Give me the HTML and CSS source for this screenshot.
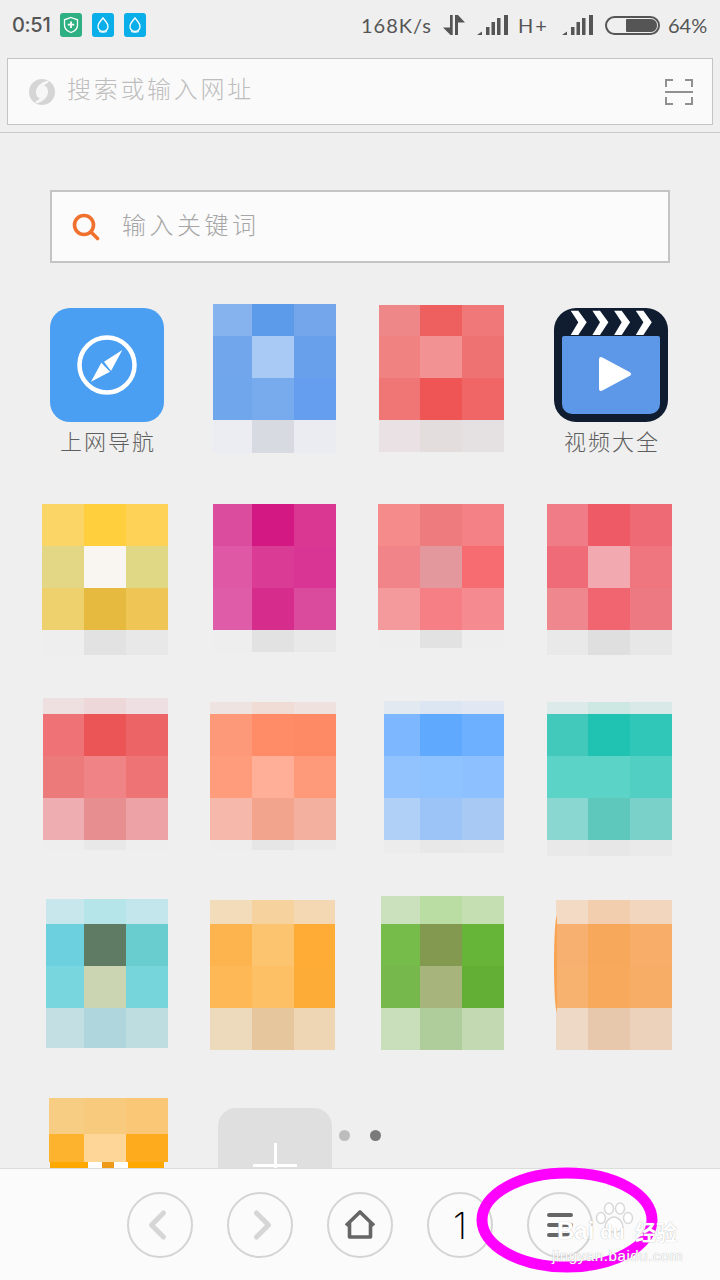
FILE: index.html
```html
<!DOCTYPE html>
<html lang="zh-CN">
<head>
    <meta charset="UTF-8">
    <meta name="viewport" content="width=device-width, initial-scale=1.0">
    <title>浏览器主页</title>
    <link rel="stylesheet" href="styles.css">
</head>
<body>
    <header class="top">
        <div class="status">
            <span class="clock">0:51</span>
            <svg class="notice" viewBox="0 0 22 24"><rect width="22" height="24" rx="3" fill="#2fb083"/><path d="M11 4.500l6.500 2.300v5.400c0 3.600-2.800 5.900-6.500 7.300-3.700-1.400-6.500-3.700-6.500-7.300V6.800z" fill="none" stroke="#fff" stroke-width="1.300"/><path d="M11 8.500v6.500M7.800 11.700h6.400" stroke="#fff" stroke-width="1.800"/></svg>
            <svg class="notice" viewBox="0 0 22 24"><rect width="22" height="24" rx="3" fill="#0aaee8"/><path d="M11 5c2 2.500 5 5.200 5 8.400a5 5 0 0 1-10 0C6 10.200 9 7.500 11 5z" fill="none" stroke="#fff" stroke-width="1.300"/><path d="M7 18.500c2.500 1 5.500 1 8 0" fill="none" stroke="#fff" stroke-width="1"/></svg>
            <svg class="notice" viewBox="0 0 22 24"><rect width="22" height="24" rx="3" fill="#0aaee8"/><path d="M11 5c2 2.500 5 5.200 5 8.400a5 5 0 0 1-10 0C6 10.200 9 7.500 11 5z" fill="none" stroke="#fff" stroke-width="1.300"/><path d="M7 18.500c2.500 1 5.500 1 8 0" fill="none" stroke="#fff" stroke-width="1"/></svg>
            <span class="status-right">
                <span class="speed">168K/s</span>
                <svg class="arrows" viewBox="0 0 22 20"><path d="M7 0h2.700v20H7.500L0 12.500h7zM12 0h3l7 7.500h-7V20h-3z" fill="#555"/></svg>
                <svg class="signal" viewBox="0 0 31 20"><path d="M0 20l5-3.500V20zM9 20v-8h3.500v8zM14.500 20V7H18v13zM20 20V3h3.500v17zM27 20V0h4v20z" fill="#555"/></svg>
                <span class="net">H+</span>
                <svg class="signal second" viewBox="0 0 31 20"><path d="M0 20l5-3.500V20zM9 20v-8h3.500v8zM14.500 20V7H18v13zM20 20V3h3.500v17zM27 20V0h4v20z" fill="#555"/></svg>
                <span class="battery"><span class="battery-level"></span></span>
                <span class="percent">64%</span>
            </span>
        </div>
        <div class="address">
            <svg class="address-logo" viewBox="0 0 26 26"><circle cx="13" cy="13" r="13" fill="#d5d5d5"/><path d="M19 1.500C12 3 6.500 8 7 14c.2 3 2 5 4 5.500C7 22 5.500 23.500 7 24.500c7-1.500 12.500-6.500 12-12.500-.2-3-2-5-4-5.500 4-2.500 5.500-4 4-5z" fill="#f6f6f6"/></svg>
            <span class="address-text">搜索或输入网址</span>
            <svg class="scan" viewBox="0 0 28 26"><path d="M1 8V1h7M20 1h7v7M1 18v7h7M20 25h7v-7" fill="none" stroke="#909090" stroke-width="2"/><path d="M0 13h28" stroke="#909090" stroke-width="2"/></svg>
        </div>
    </header>

    <main class="home">
        <div class="keyword">
            <svg class="keyword-icon" viewBox="0 0 28 28"><circle cx="12" cy="12" r="9.500" fill="none" stroke="#f0702d" stroke-width="3.600"/><path d="M19 19l6.500 6.500" stroke="#f0702d" stroke-width="3.600" stroke-linecap="round"/></svg>
            <span class="keyword-text">输入关键词</span>
        </div>

        <div class="apps">
            <div class="cell app">
                <svg class="app-icon" viewBox="0 0 114 114"><rect width="114" height="114" rx="20" fill="#4a9ff2"/><circle cx="57" cy="57" r="27.500" fill="none" stroke="#fff" stroke-width="4.500"/><path d="M72.300 42L54 53.700 61 63zM41 73.700L51.300 54.700 60 63.700z" fill="#fff"/></svg>
                <span class="app-name">上网导航</span>
            </div>
            <div class="cell" data-tile="0"></div>
            <div class="cell" data-tile="1"></div>
            <div class="cell app video">
                <svg class="app-icon" viewBox="0 0 114 114">
                    <rect width="114" height="114" rx="22" fill="#101d30"/>
                    <path d="M16.700 2.700h7.600l8.400 11.600L24.300 27h-7.600l7.600-12.700zM38.400 2.700H46l8.400 11.600L46 27h-7.600L46 14.300zM60.100 2.700h7.600l8.400 11.600L67.700 27h-7.600l7.600-12.700zM81.800 2.700h7.600l8.400 11.600L89.400 27h-7.600l7.600-12.700z" fill="#fff"/>
                    <path d="M10 28h94a2 2 0 0 1 2 2v66a10 10 0 0 1-10 10H18A10 10 0 0 1 8 96V30a2 2 0 0 1 2-2z" fill="#5c97e8"/>
                    <path d="M47 51l28 15-28 15z" fill="#fff" stroke="#fff" stroke-width="4" stroke-linejoin="round"/>
                </svg>
                <span class="app-name">视频大全</span>
            </div>

            <div class="cell" data-tile="2"></div>
            <div class="cell" data-tile="3"></div>
            <div class="cell" data-tile="4"></div>
            <div class="cell" data-tile="5"></div>

            <div class="cell" data-tile="6"></div>
            <div class="cell" data-tile="7"></div>
            <div class="cell" data-tile="8"></div>
            <div class="cell" data-tile="9"></div>

            <div class="cell" data-tile="10"></div>
            <div class="cell" data-tile="11"></div>
            <div class="cell" data-tile="12"></div>
            <div class="cell" data-tile="13"><span class="tile-edge"></span></div>

            <div class="cell" data-tile="14"><div class="tile-strip"></div></div>
            <div class="cell add-cell">
                <div class="add-tile"><span class="plus"></span></div>
            </div>
        </div>

        <div class="dots"><span class="dot"></span><span class="dot active"></span></div>
    </main>

    <footer class="toolbar">
        <button class="round">
            <svg viewBox="2 2 62 62"><path d="M36.500 21L24.500 33l12 12" fill="none" stroke="#d6d6d6" stroke-width="5" stroke-linecap="round" stroke-linejoin="round"/></svg>
        </button>
        <button class="round">
            <svg viewBox="2 2 62 62"><path d="M29.500 21l12 12-12 12" fill="none" stroke="#d6d6d6" stroke-width="5" stroke-linecap="round" stroke-linejoin="round"/></svg>
        </button>
        <button class="round">
            <svg viewBox="2 2 62 62"><path d="M19 33.500L33 20l14 13.500M22.500 31v14h21V31" fill="none" stroke="#666" stroke-width="3.600" stroke-linejoin="round"/></svg>
        </button>
        <button class="round count">1</button>
        <button class="round">
            <svg viewBox="2 2 62 62"><path d="M22 23h22M22 33h22M22 43h22" stroke="#666" stroke-width="4" stroke-linecap="round"/></svg>
        </button>
    </footer>

    <svg class="mark" viewBox="0 0 190 114"><ellipse cx="95" cy="54" rx="85" ry="47" fill="none" stroke="#ff00ff" stroke-width="11"/></svg>

    <div class="watermark">
        <svg class="paw" viewBox="0 0 40 32"><g fill="none" stroke="#d8d8d8" stroke-width="1.500"><ellipse cx="7" cy="16" rx="4.500" ry="5.500" fill="#fff"/><ellipse cx="15" cy="6.500" rx="4.500" ry="5.500" fill="#fff"/><ellipse cx="26" cy="6.500" rx="4.500" ry="5.500" fill="#fff"/><ellipse cx="34" cy="16" rx="4.500" ry="5.500" fill="#fff"/><path d="M20 15c5 0 9 6 9 10s-4 5-9 5-9-1-9-5 4-10 9-10z" fill="#fff"/></g></svg>
        <span class="wm-brand">Bai<span class="wm-du">du</span></span>
        <span class="wm-cn">经验</span>
        <span class="wm-url">jingyan.baidu.com</span>
    </div>

    <script src="script.js"></script>
</body>
</html>
```

FILE: styles.css
```css
* {
    box-sizing: border-box;
}

html, body {
    margin: 0;
    padding: 0;
}

body {
    position: relative;
    display: flex;
    flex-direction: column;
    width: 720px;
    height: 1280px;
    overflow: hidden;
    background-color: #efefef;
    font-family: "Noto Sans CJK SC", sans-serif;
}

/* status bar and address bar */
.top {
    height: 133px;
    border-bottom: 1px solid #c8c8c8;
}

.status {
    display: flex;
    align-items: center;
    height: 50px;
    padding: 0 12px;
    color: #555;
    font-family: Lato, sans-serif;
}

.clock {
    width: 48px;
    font-family: Inter, sans-serif;
    font-size: 20px;
    font-weight: 500;
    letter-spacing: -0.3px;
}

.notice {
    width: 22px;
    height: 24px;
    margin-right: 10px;
}

.status-right {
    display: flex;
    align-items: center;
    margin-left: auto;
}

.speed {
    font-size: 20px;
    letter-spacing: 1px;
    width: 82px;
}

.arrows {
    width: 22px;
    height: 20px;
    margin-right: 12px;
}

.signal {
    width: 31px;
    height: 20px;
}

.signal.second {
    margin-right: 12px;
}

.net {
    width: 54px;
    padding-left: 10px;
    font-size: 20px;
    letter-spacing: 2px;
}

.battery {
    display: flex;
    justify-content: flex-end;
    align-items: center;
    width: 55px;
    height: 19px;
    padding: 1px;
    margin-right: 8px;
    border: 2px solid #555;
    border-radius: 10px;
}

.battery-level {
    width: 31px;
    height: 13px;
    background-color: #555;
    border-radius: 1px 6px 6px 1px;
}

.percent {
    width: 40px;
    font-size: 20px;
}

.address {
    display: flex;
    align-items: center;
    height: 67px;
    margin: 8px 7px 0;
    padding: 0 19px 0 21px;
    background-color: #fafafa;
    border: 1px solid #c4c4c4;
}

.address-logo {
    width: 26px;
    height: 26px;
    margin-right: 12px;
}

.address-text {
    padding-bottom: 9px;
    font-size: 24px;
    font-weight: 300;
    letter-spacing: 2.700px;
    color: #bdbdbd;
}

.scan {
    width: 28px;
    height: 26px;
    margin-left: auto;
}

/* home page */
.home {
    position: relative;
    flex: 1;
    overflow: hidden;
}

.keyword {
    display: flex;
    align-items: center;
    height: 73px;
    margin: 57px 50px 0;
    padding: 0 20px;
    background-color: #fbfbfb;
    border: 2px solid #c4c4c4;
}

.keyword-icon {
    width: 28px;
    height: 28px;
    margin-right: 22px;
}

.keyword-text {
    padding-bottom: 6px;
    font-size: 24px;
    font-weight: 300;
    letter-spacing: 3.500px;
    color: #a6a6a6;
}

.apps {
    display: grid;
    grid-template-columns: repeat(4, 168px);
    grid-template-rows: 200px 194px 198px 202px auto;
    margin: 41px 0 0 42px;
}

.cell {
    position: relative;
}

.app {
    display: flex;
    flex-direction: column;
    align-items: center;
    width: 114px;
    margin: 4px 0 0 8px;
}

.app-icon {
    display: block;
    width: 114px;
    height: 114px;
}

.app-name {
    margin-top: 4px;
    margin-right: -2px;
    font-size: 22px;
    font-weight: 300;
    letter-spacing: 2px;
    line-height: 28px;
    color: #5f5f5f;
    white-space: nowrap;
}

.tile {
    display: grid;
}

.tile-edge {
    position: absolute;
    left: 8px;
    top: 20px;
    width: 3px;
    height: 96px;
    background-color: #f9a452;
    border-radius: 100% 0 0 100% / 50% 0 0 50%;
}

.tile-strip {
    height: 6px;
    width: 114px;
    margin-left: 8px;
    background: linear-gradient(to right, #ffa800 38px, #fff 38px, #fff 52px, #ee9b1c 52px, #ee9b1c 64px, #fff 64px, #fff 78px, #ffa800 78px);
}

.add-cell {
    padding: 10px 0 0 8px;
}

.add-tile {
    position: relative;
    width: 114px;
    height: 114px;
    background-color: #dfdfdf;
    border-radius: 18px;
}

.plus {
    position: absolute;
    left: 35px;
    top: 35px;
    width: 44px;
    height: 44px;
    background:
        linear-gradient(#fff, #fff) center / 44px 3px no-repeat,
        linear-gradient(#fff, #fff) center / 3px 44px no-repeat;
}

.dots {
    position: absolute;
    left: 339px;
    top: 997px;
    display: flex;
    gap: 20px;
}

.dot {
    width: 11px;
    height: 11px;
    background-color: #bdbdbd;
    border-radius: 50%;
}

.dot.active {
    background-color: #7a7a7a;
}

/* bottom toolbar */
.toolbar {
    display: flex;
    justify-content: center;
    gap: 34px;
    height: 112px;
    padding-top: 23px;
    background-color: #fbfbfb;
    border-top: 1px solid #dcdcdc;
}

.round {
    width: 66px;
    height: 66px;
    padding: 0;
    background: none;
    border: 2px solid #d4d4d4;
    border-radius: 50%;
}

.round svg {
    display: block;
    width: 62px;
    height: 62px;
}

.count {
    font-family: Inter, sans-serif;
    font-size: 37px;
    font-weight: 200;
    color: #000;
}

/* marker and watermark drawn over the screenshot */
.mark {
    position: absolute;
    left: 472px;
    top: 1166px;
    width: 190px;
    height: 114px;
}

.watermark {
    position: absolute;
    left: 550px;
    top: 1200px;
    width: 134px;
    height: 64px;
    color: #fff;
    font-family: "Liberation Sans", sans-serif;
}

.paw {
    position: absolute;
    left: 44px;
    top: 2px;
    width: 40px;
    height: 32px;
}

.wm-brand {
    position: absolute;
    left: 7px;
    top: 17px;
    font-size: 24px;
    font-weight: 700;
    text-shadow: 0 0 1px #aaa;
}

.wm-du {
    position: relative;
    left: 6px;
    font-size: 20px;
}

.wm-cn {
    position: absolute;
    left: 85px;
    top: 18px;
    font-family: "Noto Sans CJK SC", sans-serif;
    font-size: 21px;
    line-height: 26px;
    font-weight: 700;
    text-shadow: 0 0 1px #aaa;
}

.wm-url {
    position: absolute;
    left: 2px;
    top: 48px;
    font-size: 15px;
    line-height: 16px;
    letter-spacing: 0.600px;
    text-shadow: 0 0 1px #999;
}
```

FILE: script.js
```js
// blurred app tiles: column widths, row heights, offset in the cell, cell colours row by row
const bg = '#eeeeee';
const tiles = [
    { left: 3, top: 0, cols: [39, 42, 42], rows: [32, 42, 42, 33], colors: ['#86b2ee', '#5c9bea', '#74a6ec', '#71a6ed', '#a9caf5', '#68a0eb', '#6fa6ec', '#78abee', '#659eee', '#ecedf2', '#d7dae0', '#ebecf1'] },
    { left: 1, top: 1, cols: [41, 42, 42], rows: [31, 42, 42, 32], colors: ['#ee8888', '#ee5f5f', '#f07878', '#f08282', '#f29292', '#ef7272', '#f07676', '#ef5555', '#f06666', '#e9e1e3', '#e3dddd', '#e5e1e2'] },
    { left: 0, top: 0, cols: [42, 42, 42], rows: [42, 42, 42, 25], colors: ['#fbd565', '#ffcf3d', '#fdd257', '#e3d785', '#f9f5f0', '#e1d886', '#eed06d', '#e5ba3f', '#efc656', bg, '#e2e2e2', '#e8e8e8'] },
    { left: 3, top: 0, cols: [39, 42, 42], rows: [42, 42, 42, 22], colors: ['#db4b9e', '#d31783', '#d93792', '#de58a5', '#d93b95', '#d93594', '#df5ca9', '#d62d8d', '#da4b9d', bg, '#e2e2e2', '#e9e9e9'] },
    { left: 0, top: 0, cols: [42, 42, 42], rows: [42, 42, 42, 18], colors: ['#f68b8c', '#ee7b7d', '#f48185', '#f08488', '#e2989c', '#f66c71', '#f49a9c', '#f67f85', '#f58b90', bg, '#e2e2e2', bg] },
    { left: 1, top: 0, cols: [41, 42, 42], rows: [42, 42, 42, 25], colors: ['#ef7c86', '#ee5a66', '#ee6a75', '#ef6b77', '#f2aab0', '#ef757f', '#ef888e', '#f0656f', '#ed7a82', '#e9e9e9', '#dfdfdf', '#e7e7e7'] },
    { left: 1, top: 0, cols: [41, 42, 42], rows: [16, 42, 42, 42, 10], colors: ['#eee0e1', '#eed7d9', '#eee0e2', '#ef7276', '#ec5556', '#ed6466', '#ed7a7a', '#ef8385', '#ed7375', '#eeadb0', '#e78f90', '#eda3a5', bg, '#e8e8e8', bg] },
    { left: 0, top: 4, cols: [42, 42, 42], rows: [12, 42, 42, 42, 10], colors: ['#efe3e1', '#f1dcd5', '#efe2de', '#fd9978', '#ff8c66', '#fe8965', '#fe9c7c', '#ffaf98', '#fe997a', '#f5b8aa', '#f2a48c', '#f4b09e', bg, '#e6e6e6', '#ebebeb'] },
    { left: 6, top: 3, cols: [36, 42, 42], rows: [13, 42, 42, 42, 13], colors: ['#e3e9f1', '#dbe6f2', '#e2e8f3', '#7db7ff', '#5faaff', '#6db0ff', '#92c3ff', '#8fc3ff', '#8cc0ff', '#b1d0f7', '#9cc4f6', '#a7c9f3', '#ececec', '#e8e8e8', '#e9e9e9'] },
    { left: 1, top: 4, cols: [41, 42, 42], rows: [12, 42, 42, 42, 16], colors: ['#dcebea', '#cde8e3', '#d8e9e7', '#43c9bb', '#20c2b2', '#30c6b8', '#5cd3c7', '#5bd3c7', '#50cfc2', '#8ad6d0', '#5fc8bc', '#7ad1ca', '#e9e9e9', '#e7e7e7', '#eaeaea'] },
    { left: 4, top: 3, cols: [38, 42, 42], rows: [25, 42, 42, 40], colors: ['#c8e7ec', '#b5e4e9', '#c2e6eb', '#6dd0de', '#5f7b63', '#69cdd0', '#78d6df', '#cbd5b2', '#75d5da', '#c4dfe3', '#aed6dc', '#bedde1'] },
    { left: 0, top: 4, cols: [42, 42, 41], rows: [24, 42, 42, 42], colors: ['#f3dcba', '#f5d29e', '#f4d8b4', '#feb44e', '#fdc46f', '#feac36', '#feb855', '#fec065', '#feac38', '#eddabd', '#e6c79d', '#eed5b4'] },
    { left: 3, top: 0, cols: [39, 42, 42], rows: [28, 42, 42, 42], colors: ['#cbe1bd', '#badda4', '#c5dfb2', '#75bc4b', '#83994f', '#66b538', '#76b84b', '#a7b57d', '#63af35', '#c9deba', '#afcd9a', '#c2d9b1'] },
    { left: 10, top: 4, cols: [32, 42, 42], rows: [24, 42, 42, 42], colors: ['#f2dac4', '#f2ceae', '#f3d6be', '#f7b06f', '#f8a85b', '#f8ae69', '#f7b270', '#f9a95b', '#f8ad67', '#eed9c7', '#e8c8ac', '#ecd2bb'] },
    { left: 7, top: 0, cols: [35, 42, 42], rows: [36, 28], colors: ['#f7cd84', '#f8ca7e', '#f9c776', '#feb32e', '#fdd698', '#feab1e'] }
];

document.querySelectorAll('[data-tile]').forEach(function (cell) {
    const data = tiles[cell.dataset.tile];
    const tile = document.createElement('div');
    tile.className = 'tile';
    tile.style.gridTemplateColumns = data.cols.map(c => c + 'px').join(' ');
    tile.style.gridTemplateRows = data.rows.map(r => r + 'px').join(' ');
    tile.style.width = data.cols.reduce((a, b) => a + b) + 'px';
    tile.style.margin = data.top + 'px 0 0 ' + data.left + 'px';
    data.colors.forEach(function (color) {
        const part = document.createElement('div');
        part.style.backgroundColor = color;
        tile.appendChild(part);
    });
    cell.prepend(tile);
});
```
